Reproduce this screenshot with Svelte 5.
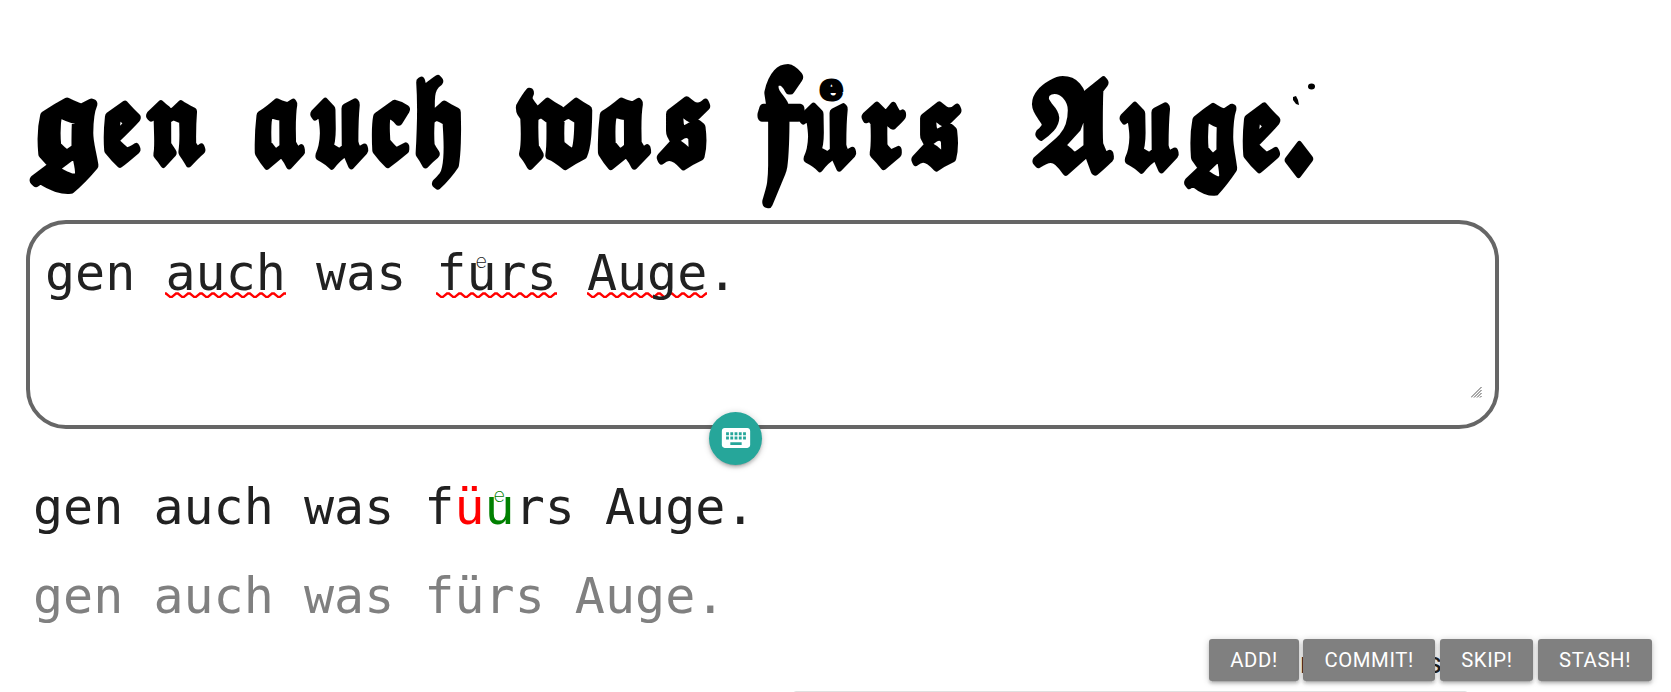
<script>
  const actions = ['ADD!', 'COMMIT!', 'SKIP!', 'STASH!'];
  // Scanned line: each piece has its origin, advance and vertical stretch.
  const scan = [
    { t: '𝖌', x: 26, w: 76, s: 1, y: 163 },
    { t: '𝖊𝖓', x: 101, w: 107, s: 0.92, y: 160 },
    { t: '𝖆𝖚', x: 252, w: 119, s: 0.97, y: 161 },
    { t: '𝖈𝖍', x: 369, w: 95, s: 0.93, y: 161 },
    { t: '𝖜𝖆𝖘', x: 513, w: 200, s: 0.98, y: 161 },
    { t: '𝖋', x: 754, w: 54, s: 1.14, y: 168 },
    { t: '𝖚𝖗𝖘', x: 796, w: 168, s: 0.93, y: 163 },
    { t: '𝕬', x: 1029, w: 88, s: 0.99, y: 167 },
    { t: '𝖚𝖌𝖊', x: 1117, w: 166, s: 0.97, y: 165 },
  ];
</script>

<main>
  <svg class="scan" viewBox="0 0 1671 220" width="1671" height="220">
    {#each scan as s}
      <text transform="translate({s.x} {s.y}) scale(1 {s.s})" textLength={s.w} lengthAdjust="spacingAndGlyphs">{s.t}</text>
    {/each}
    <text class="over" x="820" y="99">e</text>
    <text class="stop" transform="translate(1299 159.500) scale(.88 1.150) rotate(45) translate(-19 9.500)">.</text>
    <ellipse cx="1311.500" cy="86.500" rx="3.500" ry="3" />
    <path d="M1293 97l3-1 2 4 1 5-3-1-3-4z" />
  </svg>

  <section class="editor">
    <div class="line">gen <u>auch</u> was <u>f<span class="ue">u<i>e</i></span>rs</u> <u>Auge</u>.</div>
    <svg class="grip" width="11" height="11" viewBox="0 0 11 11"><path d="M0 10.500L10.500 0M3 10.500L10.500 3M6 10.500L10.500 6M9 10.500L10.500 9" /></svg>
    <button class="keys" aria-label="Keyboard">
      <svg width="34" height="34" viewBox="0 0 24 24"><path d="M20 5H4c-1.100 0-1.990.9-1.990 2L2 17c0 1.100.9 2 2 2h16c1.100 0 2-.9 2-2V7c0-1.100-.9-2-2-2zm-9 3h2v2h-2V8zm0 3h2v2h-2v-2zM8 8h2v2H8V8zm0 3h2v2H8v-2zm-1 2H5v-2h2v2zm0-3H5V8h2v2zm9 7H8v-2h8v2zm0-4h-2v-2h2v2zm0-3h-2V8h2v2zm3 3h-2v-2h2v2zm0-3h-2V8h2v2z" /></svg>
    </button>
  </section>

  <div class="line diff">gen auch was f<span class="del">ü</span><span class="ins ue">u<i>e</i></span>rs Auge.</div>
  <div class="line orig">gen auch was fürs Auge.</div>

  <div class="below"><span>n</span><span>s</span></div>
  <div class="card"></div>
  <nav>
    {#each actions as a}<button>{a}</button>{/each}
  </nav>
</main>

<style>
  :global(body) { background: #fff; overflow: hidden; }
  main {
    position: relative;
    width: 1671px;
    height: 692px;
    overflow: hidden;
    color: #212121;
    font-family: Roboto, sans-serif;
  }
  .scan { display: block; fill: #000; }
  .scan text {
    font: bold 112px "DejaVu Sans", "DejaVu Math TeX Gyre", serif;
    stroke: #000;
    stroke-width: 6.500;
    stroke-linejoin: round;
  }
  .scan .over { font: bold 36px "DejaVu Serif", serif; stroke-width: 4; }
  .scan .stop { font: bold 100px "DejaVu Sans", sans-serif; }
  .editor {
    position: relative;
    box-sizing: border-box;
    width: 1473px;
    height: 209px;
    margin-left: 26px;
    padding: 20px 15px;
    border: 4px solid #666;
    border-radius: 40px;
  }
  .line {
    font: 50px/58px "DejaVu Sans Mono", monospace;
    white-space: pre;
  }
  .diff { margin: 49px 0 0 33px; }
  .orig { margin: 31px 0 0 33px; color: #808080; }
  .del { color: red; }
  .ins { color: green; }
  u {
    display: inline-block;
    text-decoration: none;
    background: url("data:image/svg+xml,%3Csvg xmlns='http://www.w3.org/2000/svg' width='12' height='6'%3E%3Cpath d='M-3 3.500L-1 1.500H1L5 4.800H7L11 1.500H13L15 3' fill='none' stroke='red' stroke-width='2.300'/%3E%3C/svg%3E") 0 48px repeat-x;
  }
  .ue { position: relative; }
  .ue i {
    position: absolute;
    left: 9px;
    top: 7px;
    font: 200 20px/20px Inter, sans-serif;
  }
  .grip { position: absolute; right: 13px; bottom: 27px; fill: none; stroke: #555; stroke-width: 1; }
  button { border: 0; margin: 0; color: #fff; }
  .keys {
    position: absolute;
    left: 679px;
    top: 188px;
    width: 53px;
    height: 53px;
    padding: 0;
    display: grid;
    place-items: center;
    border-radius: 50%;
    background: #26a69a;
    box-shadow: 0 3px 3px rgba(0,0,0,.14), 0 4px 1px -3px rgba(0,0,0,.12), 0 1px 7px rgba(0,0,0,.2);
  }
  .keys svg { fill: #fff; margin-top: -1px; }
  nav {
    position: absolute;
    right: 19px;
    top: 639px;
    display: grid;
    grid-template-columns: 90px 132px 93px 114px;
    column-gap: 4.660px;
  }
  nav button {
    height: 42px;
    padding: 0;
    border-radius: 3px;
    background: #808080;
    font: 20.300px/42px Roboto, sans-serif;
    letter-spacing: .6px;
    box-shadow: 0 3px 3px rgba(0,0,0,.14), 0 4px 1px -3px rgba(0,0,0,.12), 0 1px 7px rgba(0,0,0,.2);
  }
  nav button:nth-child(2) { margin: 0 .6px 0 -.6px; }
  .below {
    position: absolute;
    left: 1300px;
    top: 644px;
    width: 142px;
    display: flex;
    justify-content: space-between;
    font: 30px/38px Roboto, sans-serif;
  }
  .card {
    position: absolute;
    left: 793px;
    top: 691px;
    width: 675px;
    height: 20px;
    box-sizing: border-box;
    border: 1px solid #e0e0e0;
    border-radius: 3px;
  }
</style>
